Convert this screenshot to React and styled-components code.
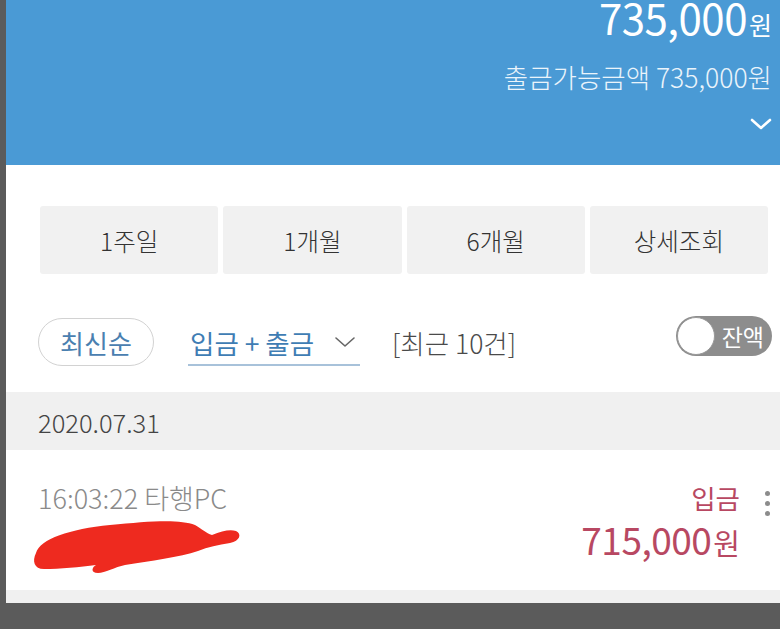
import React from 'react';
import styled, { createGlobalStyle } from 'styled-components';

const GlobalStyle = createGlobalStyle`
  html, body {
    margin: 0;
    padding: 0;
    background: #5b5b5b;
  }
  body {
    font-family: "Noto Sans CJK KR", "Noto Sans", sans-serif;
  }
`;

const Screen = styled.div`
  margin-left: 6px;
  width: 774px;
  height: 603px;
  background: #fff;
  overflow: hidden;
  display: flex;
  flex-direction: column;
`;

const Header = styled.header`
  height: 165px;
  flex: none;
  background: #4a9ad5;
  color: #fff;
  display: flex;
  flex-direction: column;
  align-items: flex-end;
  padding-right: 8px;
  box-sizing: border-box;
`;

const Balance = styled.div`
  font-size: 42px;
  letter-spacing: -0.5px;
  line-height: 34px;
  font-weight: 400;
`;

const Unit = styled.span`
  font-size: ${(p) => p.size || 24}px;
  margin-left: 2px;
  letter-spacing: 0;
`;

const Available = styled.div`
  margin-top: 18px;
  font-size: 26.5px;
  line-height: 36px;
  color: #eaf4fb;
  font-weight: 300;
`;

const ChevronWrap = styled.div`
  margin-top: 22px;
  width: 22px;
  height: 14px;
  display: flex;
`;

const Body = styled.div`
  padding: 41px 12px 0 34px;
`;

const PeriodRow = styled.div`
  display: grid;
  grid-template-columns: repeat(4, 1fr);
  gap: 5px;
`;

const PeriodButton = styled.button`
  height: 68px;
  border: none;
  border-radius: 3px;
  background: #f1f1f1;
  color: #333;
  font-family: inherit;
  font-size: 24.5px;
  font-weight: 300;
  padding: 0;
`;

const FilterRow = styled.div`
  margin-top: 44px;
  height: 48px;
  display: flex;
  align-items: center;
`;

const SortPill = styled.div`
  width: 116px;
  height: 48px;
  box-sizing: border-box;
  border: 1.5px solid #d2d2d2;
  border-radius: 24px;
  margin-left: -2px;
  display: flex;
  align-items: center;
  justify-content: center;
  color: #4a80b0;
  font-size: 26px;
`;

const TypeSelect = styled.div`
  margin-left: 34px;
  width: 172px;
  height: 48px;
  box-sizing: border-box;
  border-bottom: 2px solid #a8c2da;
  display: flex;
  align-items: center;
  justify-content: space-between;
  padding: 2px 4px 0 2px;
  color: #3f7db4;
  font-size: 26.5px;
`;

const RecentCount = styled.div`
  margin-left: 32px;
  color: #4a4a4a;
  font-size: 26.5px;
  font-weight: 300;
`;

const Toggle = styled.div`
  margin-left: auto;
  margin-right: -4px;
  width: 96px;
  height: 40px;
  box-sizing: border-box;
  border-radius: 20px;
  background: #8d8d8d;
  display: flex;
  align-items: center;
  padding: 0 8px 0 1px;
  margin-top: -12px;
`;

const Knob = styled.div`
  width: 38px;
  height: 38px;
  border-radius: 50%;
  background: #fff;
  box-sizing: border-box;
  border: 1.5px solid #9a9a9a;
`;

const ToggleLabel = styled.span`
  margin-left: auto;
  color: #fff;
  font-size: 23px;
`;

const DateHeader = styled.div`
  margin-top: 26px;
  height: 58px;
  background: #f0f0f0;
  display: flex;
  align-items: center;
  padding-left: 32px;
  color: #444;
  font-size: 25.5px;
  font-weight: 300;
`;

const TxRow = styled.div`
  height: 140px;
  box-sizing: border-box;
  display: flex;
  padding: 29px 0 0 32px;
`;

const TxLeft = styled.div`
  flex: 1;
  display: flex;
  flex-direction: column;
`;

const TxTime = styled.div`
  color: #8a8a8a;
  font-size: 27px;
  line-height: 38px;
  font-weight: 300;
`;

const Scribble = styled.svg`
  margin: -4px 0 0 -8px;
  display: block;
`;

const TxRight = styled.div`
  margin-right: 14px;
  display: flex;
  flex-direction: column;
  align-items: flex-end;
  color: #b84862;
`;

const TxType = styled.div`
  font-size: 26.5px;
  line-height: 38px;
`;

const TxAmount = styled.div`
  font-size: 37px;
  line-height: 44px;
  letter-spacing: -0.5px;
`;

const Kebab = styled.div`
  width: 26px;
  padding-top: 12px;
  display: flex;
  flex-direction: column;
  align-items: center;
  gap: 5px;
`;

const Dot = styled.span`
  width: 5px;
  height: 5px;
  border-radius: 50%;
  background: #8c8c8c;
`;

const BottomStrip = styled.div`
  flex: 1;
  background: #f0f0f0;
`;

const periods = ['1주일', '1개월', '6개월', '상세조회'];

export default function App() {
  return (
    <>
      <GlobalStyle />
      <Screen>
        <Header>
          <Balance>
            735,000<Unit size={25}>원</Unit>
          </Balance>
          <Available>출금가능금액 735,000원</Available>
          <ChevronWrap>
            <svg width="22" height="14" viewBox="0 0 22 14">
              <path d="M2 3 L11 11 L20 3" fill="none" stroke="#fff" strokeWidth="2.6" strokeLinecap="round" strokeLinejoin="round" />
            </svg>
          </ChevronWrap>
        </Header>

        <Body>
          <PeriodRow>
            {periods.map((p) => (
              <PeriodButton key={p}>{p}</PeriodButton>
            ))}
          </PeriodRow>

          <FilterRow>
            <SortPill>최신순</SortPill>
            <TypeSelect>
              <span>입금 + 출금</span>
              <svg width="22" height="12" viewBox="0 0 22 12">
                <path d="M2 2 L11 10 L20 2" fill="none" stroke="#666" strokeWidth="1.6" strokeLinecap="round" strokeLinejoin="round" />
              </svg>
            </TypeSelect>
            <RecentCount>[최근 10건]</RecentCount>
            <Toggle>
              <Knob />
              <ToggleLabel>잔액</ToggleLabel>
            </Toggle>
          </FilterRow>
        </Body>

        <DateHeader>2020.07.31</DateHeader>

        <TxRow>
          <TxLeft>
            <TxTime>16:03:22 타행PC</TxTime>
            <Scribble width="215" height="66" viewBox="0 0 215 66">
              <path
                d="M6 40 C10 26 40 16 80 12 C120 8 150 6 165 12 C172 16 176 20 182 22 C192 18 200 16 206 18 C212 21 210 28 200 30 C188 32 178 34 168 38 C150 44 120 48 95 52 C85 54 75 60 68 60 C60 60 62 54 66 52 C50 54 30 56 14 56 C4 56 2 48 6 40 Z"
                fill="#ee2a1f"
              />
            </Scribble>
          </TxLeft>
          <TxRight>
            <TxType>입금</TxType>
            <TxAmount>
              715,000<Unit size={29}>원</Unit>
            </TxAmount>
          </TxRight>
          <Kebab>
            <Dot />
            <Dot />
            <Dot />
          </Kebab>
        </TxRow>

        <BottomStrip />
      </Screen>
    </>
  );
}
